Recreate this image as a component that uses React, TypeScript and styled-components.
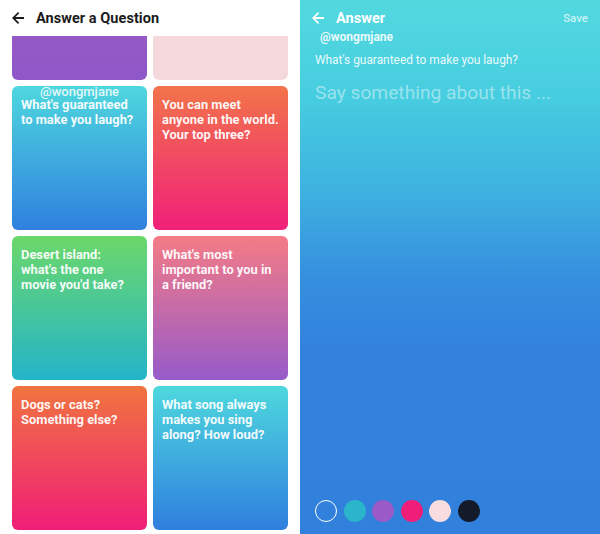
import styled, {createGlobalStyle} from "styled-components";

const GlobalStyle = createGlobalStyle`
  html, body {
    margin: 0;
    padding: 0;
    background: #ffffff;
  }
  body {
    font-family: Roboto, "Noto Sans", "Liberation Sans", sans-serif;
    -webkit-font-smoothing: antialiased;
  }
`;

const Screen = styled.div`
  display: flex;
  width: 600px;
  height: 534px;
  overflow: hidden;
`;

const ListPane = styled.div`
  width: 300px;
  height: 100%;
  display: flex;
  flex-direction: column;
  background: #ffffff;
`;

const Header = styled.div<{light?: boolean}>`
  height: 36px;
  flex-shrink: 0;
  display: flex;
  align-items: center;
  padding: 0 12px;
  gap: 12px;
  color: ${(p) => (p.light ? "#ffffff" : "#1b1b1b")};
  background: ${(p) => (p.light ? "transparent" : "#ffffff")};
  position: relative;
  z-index: 2;
`;

const HeaderTitle = styled.h1`
  margin: 0;
  font-size: 14.5px;
  font-weight: 700;
  letter-spacing: 0.05px;
  flex: 1;
`;

const SaveLink = styled.span`
  font-size: 11.5px;
  font-weight: 500;
  color: rgba(255, 255, 255, 0.7);
`;

const Scroller = styled.div`
  flex: 1;
  overflow: hidden;
  position: relative;
`;

const Grid = styled.div`
  display: grid;
  grid-template-columns: 135px 135px;
  grid-auto-rows: 144px;
  gap: 6px;
  padding: 0 12px;
  margin-top: -100px;
`;

const Card = styled.div<{from: string; to: string}>`
  position: relative;
  border-radius: 6px;
  background: linear-gradient(180deg, ${(p) => p.from}, ${(p) => p.to});
  padding: 11px 8.5px 11px 9px;
  box-sizing: border-box;
`;

const CardText = styled.p`
  margin: 0;
  color: rgba(255, 255, 255, 0.95);
  font-size: 12.9px;
  font-weight: 700;
  line-height: 15.2px;
`;

const FlyingHandle = styled.span`
  position: absolute;
  left: 28px;
  top: -2px;
  font-size: 13px;
  font-weight: 500;
  color: rgba(255, 255, 255, 0.85);
`;

const AnswerPane = styled.div`
  width: 300px;
  height: 100%;
  display: flex;
  flex-direction: column;
  background: linear-gradient(
    180deg,
    #52d9df 0%,
    #47cde0 18%,
    #3eb3e0 35%,
    #368fde 52%,
    #3282dd 65%,
    #3080dc 100%
  );
`;

const Body = styled.div`
  flex: 1;
  display: flex;
  flex-direction: column;
  padding: 0 15px;
`;

const Handle = styled.div`
  font-size: 12px;
  font-weight: 700;
  color: rgba(255, 255, 255, 0.9);
  padding-left: 5px;
  margin-top: -6px;
`;

const Question = styled.div`
  margin-top: 9px;
  font-size: 11.9px;
  color: rgba(255, 255, 255, 0.9);
`;

const Placeholder = styled.div`
  margin-top: 14px;
  font-size: 19.2px;
  color: rgba(255, 255, 255, 0.45);
`;

const Swatches = styled.div`
  margin-top: auto;
  margin-bottom: 12px;
  display: flex;
  gap: 6.5px;
`;

const Swatch = styled.span<{color: string; outline?: boolean}>`
  width: 22px;
  height: 22px;
  border-radius: 50%;
  box-sizing: border-box;
  background: ${(p) => (p.outline ? "transparent" : p.color)};
  border: ${(p) => (p.outline ? "1.5px solid #ffffff" : "none")};
`;

const BackArrow = ({color}: {color: string}) => (
  <svg width="12" height="12" viewBox="4 4 16 16" fill={color}>
    <path d="M20 10.6H8.6l5-5L12 4l-8 8 8 8 1.6-1.6-5-5H20v-2.8z" />
  </svg>
);

const cards = [
  {from: "#a060bf", to: "#8f57c8", text: ""},
  {from: "#f6d9dd", to: "#f5d8dc", text: ""},
  {from: "#4ed7de", to: "#2f80de", text: "What's guaranteed to make you laugh?"},
  {from: "#f2744a", to: "#f0207a", text: "You can meet anyone in the world. Your top three?"},
  {from: "#6cd86a", to: "#24b4ca", text: "Desert island: what's the one movie you'd take?"},
  {from: "#f47b86", to: "#975bc9", text: "What's most important to you in a friend?"},
  {from: "#f0743f", to: "#f01e78", text: "Dogs or cats? Something else?"},
  {from: "#4ed8de", to: "#2f7fde", text: "What song always makes you sing along? How loud?"},
];

const swatches = ["#ffffff", "#2ab5ca", "#9a5bc9", "#f01e78", "#f8dde0", "#141a2a"];

export default function App() {
  return (
    <>
      <GlobalStyle />
      <Screen>
        <ListPane>
          <Header>
            <BackArrow color="#1b1b1b" />
            <HeaderTitle>Answer a Question</HeaderTitle>
          </Header>
          <Scroller>
            <Grid>
              {cards.map((c, i) => (
                <Card key={i} from={c.from} to={c.to}>
                  {i === 2 && <FlyingHandle>@wongmjane</FlyingHandle>}
                  {c.text && <CardText>{c.text}</CardText>}
                </Card>
              ))}
            </Grid>
          </Scroller>
        </ListPane>
        <AnswerPane>
          <Header light>
            <BackArrow color="#ffffff" />
            <HeaderTitle>Answer</HeaderTitle>
            <SaveLink>Save</SaveLink>
          </Header>
          <Body>
            <Handle>@wongmjane</Handle>
            <Question>What's guaranteed to make you laugh?</Question>
            <Placeholder>Say something about this ...</Placeholder>
            <Swatches>
              {swatches.map((s, i) => (
                <Swatch key={s} color={s} outline={i === 0} />
              ))}
            </Swatches>
          </Body>
        </AnswerPane>
      </Screen>
    </>
  );
}
